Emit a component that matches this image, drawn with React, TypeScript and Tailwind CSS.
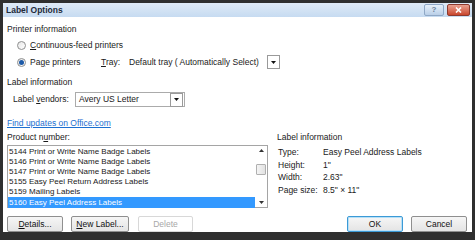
import React from 'react';

const font = { fontFamily: '"Liberation Sans", Arial, sans-serif' };

const Radio: React.FC<{ checked?: boolean }> = ({ checked }) => (
  <span className="w-[9px] h-[9px] rounded-full border border-[#8e8f8f] bg-gradient-to-br from-[#e6e6e6] to-white flex items-center justify-center">
    {checked && <span className="w-[5px] h-[5px] rounded-full bg-[#1d5aa8]" />}
  </span>
);

const DropBtn: React.FC = () => (
  <span className="w-[13px] h-[14px] border border-[#9a9a9a] bg-white flex items-center justify-center">
    <svg width="5" height="3" viewBox="0 0 5 3"><path d="M0 0h5L2.5 3z" fill="#111" /></svg>
  </span>
);

const Btn: React.FC<{ children: React.ReactNode; w: string; disabled?: boolean; focus?: boolean }> = ({ children, w, disabled, focus }) => (
  <div
    className={`${w} h-[16px] rounded-[2px] flex items-center justify-center text-[8.5px] ${
      focus ? 'border border-[#3c9ad6] shadow-[inset_0_0_0_1px_#b7e0f7]' : disabled ? 'border border-[#d8d8d8]' : 'border border-[#8f8f8f]'
    } ${disabled ? 'text-[#a8a8a8] bg-white' : 'text-[#111] bg-gradient-to-b from-[#f6f6f6] to-[#e4e4e4]'}`}
  >
    {children}
  </div>
);

const products = [
  '5144 Print or Write Name Badge Labels',
  '5146 Print or Write Name Badge Labels',
  '5147 Print or Write Name Badge Labels',
  '5155 Easy Peel Return Address Labels',
  '5159 Mailing Labels',
];

export default function App() {
  return (
    <div className="w-[475px] h-[240px] bg-[#2f2f2f] pt-[3px] px-[3px] pb-[8px]" style={font}>
      <div className="w-full h-full flex flex-col bg-white">
        {/* title bar */}
        <div className="h-[16px] flex items-center justify-between bg-gradient-to-b from-[#dfeaf7] to-[#c6dbf1] pl-[3px] pr-[2px]">
          <span className="text-[8.5px] font-bold text-[#1e2a3a]">Label Options</span>
          <div className="flex gap-[3px] items-center">
            <div className="w-[20px] h-[12px] rounded-[2px] border border-[#8fa8c6] bg-gradient-to-b from-[#e7f0fa] to-[#b9cfe8] flex items-center justify-center text-[8px] text-[#6b7f99] font-bold">?</div>
            <div className="w-[23px] h-[12px] rounded-[2px] border border-[#8c3a2e] bg-gradient-to-b from-[#e8a090] to-[#c9452c] flex items-center justify-center">
              <svg width="7" height="6" viewBox="0 0 7 6"><path d="M1 0.5l5 5M6 0.5l-5 5" stroke="#fff" strokeWidth="1.6" /></svg>
            </div>
          </div>
        </div>

        {/* body */}
        <div className="flex-1 flex flex-col pl-[4px] pr-[5px] text-[8.5px] text-[#1a1a1a] leading-[11px]">
          <div className="mt-[7px]">Printer information</div>
          <div className="flex items-center gap-[4px] mt-[5px] ml-[10px]">
            <Radio />
            <span><u>C</u>ontinuous-feed printers</span>
          </div>
          <div className="flex items-center mt-[4px] ml-[10px] h-[14px]">
            <Radio checked />
            <span className="ml-[4px] w-[71px]">Pa<u>g</u>e printers</span>
            <span className="w-[28px]"><u>T</u>ray:</span>
            <span className="w-[138px]">Default tray ( Automatically Select)</span>
            <DropBtn />
          </div>
          <div className="mt-[8px]">Label information</div>
          <div className="flex items-center mt-[4px] ml-[6px]">
            <span className="w-[62px]">Label <u>v</u>endors:</span>
            <div className="w-[110px] h-[15px] border border-[#ababab] flex items-center justify-between pl-[3px] pr-[1px]">
              <span>Avery US Letter</span>
              <DropBtn />
            </div>
          </div>
          <div className="mt-[11px] text-[#1c6fd0] underline decoration-[#1c6fd0]">Find updates on Office.com</div>

          <div className="flex mt-[3px]">
            <div className="w-[261px] flex flex-col">
              <div>Product n<u>u</u>mber:</div>
              <div className="mt-[2px] h-[63px] border border-[#a5a5a5] flex">
                <div className="flex-1 flex flex-col pt-[1px]">
                  {products.map((p) => (
                    <div key={p} className="h-[10px] leading-[10px] pl-[1px] text-[8px]">{p}</div>
                  ))}
                  <div className="h-[11px] leading-[11px] pl-[1px] text-[8px] bg-[#3399ff] text-white">5160 Easy Peel Address Labels</div>
                </div>
                <div className="w-[12px] flex flex-col items-center justify-between py-[3px]">
                  <svg width="5" height="3" viewBox="0 0 5 3"><path d="M0 3h5L2.5 0z" fill="#333" /></svg>
                  <div className="w-[10px] h-[11px] border border-[#b0b0b0] rounded-[1px] bg-gradient-to-r from-[#f4f4f4] to-[#e2e2e2] -mt-[14px]" />
                  <svg width="5" height="3" viewBox="0 0 5 3"><path d="M0 0h5L2.5 3z" fill="#333" /></svg>
                </div>
              </div>
            </div>
            <div className="ml-[9px] flex flex-col">
              <div>Label information</div>
              <div className="mt-[4px] flex flex-col gap-[1.5px] ml-[1px]">
                <div className="flex"><span className="w-[45px]">Type:</span><span>Easy Peel Address Labels</span></div>
                <div className="flex"><span className="w-[45px]">Height:</span><span>1"</span></div>
                <div className="flex"><span className="w-[45px]">Width:</span><span>2.63"</span></div>
                <div className="flex"><span className="w-[45px]">Page size:</span><span>8.5" × 11"</span></div>
              </div>
            </div>
          </div>

          <div className="flex items-center mt-[8px]">
            <Btn w="w-[56px]"><span><u>D</u>etails...</span></Btn>
            <div className="ml-[8px]"><Btn w="w-[58px]"><span><u>N</u>ew Label...</span></Btn></div>
            <div className="ml-[9px]"><Btn w="w-[55px]" disabled>Delete</Btn></div>
            <div className="ml-auto flex gap-[8px]">
              <Btn w="w-[56px]" focus>OK</Btn>
              <Btn w="w-[56px]">Cancel</Btn>
            </div>
          </div>
        </div>
      </div>
    </div>
  );
}
